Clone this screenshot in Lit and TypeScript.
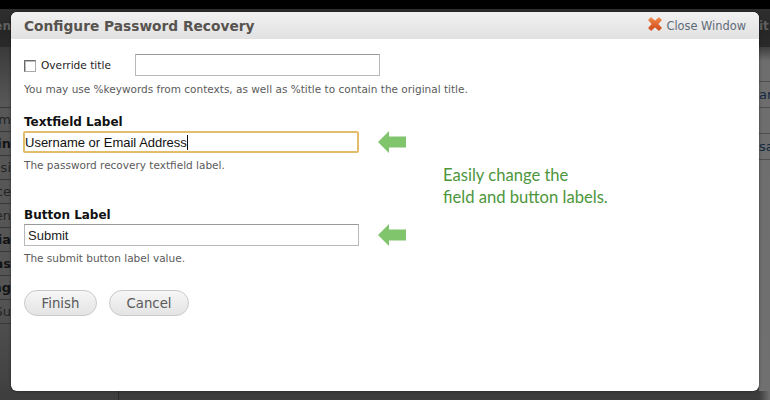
import { LitElement, html, css, svg } from "lit";
import { customElement } from "lit/decorators.js";

const arrow = svg`<svg class="arrow" width="28" height="22" viewBox="0 0 28 22"><polygon points="0,11 11,0 11,5.5 28,5.5 28,16.5 11,16.5 11,22" fill="#80c46c"/></svg>`;

@customElement("app-root")
export class AppRoot extends LitElement {
  static styles = css`
    :host { display: block; width: 770px; height: 400px; position: relative; overflow: hidden; background: #3c3c3c; font-family: "DejaVu Sans", Verdana, sans-serif; }
    .topline { height: 9px; background: #000; }
    .topbar { height: 38px; background: linear-gradient(#2f2f2f, #262626 60%, #2a2a2a); display: flex; justify-content: space-between; align-items: center; font-size: 12px; color: #5f5f5f; font-weight: bold; padding-bottom: 4px; box-sizing: border-box; }
    .topbar span { width: 11px; overflow: hidden; display: flex; white-space: nowrap; }
    .topbar .l { justify-content: flex-end; }
    .topbar .r { justify-content: flex-start; }
    .under { height: 353px; display: flex; justify-content: space-between; }
    .left { width: 11px; background: linear-gradient(#3a3a3a, #575757 16%, #555 70%, #3e3e3e); padding-top: 60px; box-sizing: border-box; }
    .right { width: 11px; background: linear-gradient(#3e3e3e, #6d6d6d 4%, #707070); padding-top: 34px; box-sizing: border-box; }
    .row { height: 24px; border-top: 1px solid #383838; box-sizing: border-box; display: flex; align-items: center; justify-content: flex-end; overflow: hidden; color: #242424; font-size: 13px; white-space: nowrap; }
    .row.b { font-weight: bold; color: #141414; }
    .left .end { height: 1px; background: #383838; }
    .rrow { height: 26px; border-top: 1px solid #4f4f4f; box-sizing: border-box; overflow: hidden; color: #12293f; font-size: 13px; display: flex; align-items: center; white-space: nowrap; }
    .foot { position: absolute; left: 0; right: 0; bottom: 0; height: 9px; display: flex; }
    .foot .a { width: 118px; background: #3e3e3e; border-right: 1px solid #2a2a2a; }
    .foot .b { flex: 1; background: #3c3c3c; }
    .foot .c { width: 11px; background: linear-gradient(90deg, #3c3c3c, #6f6f6f); }

    .modal { position: absolute; left: 11px; top: 12px; width: 748px; height: 379px; background: #fff; border-radius: 6px; overflow: hidden; box-shadow: 0 0 3px rgba(0,0,0,.5); }
    .head { height: 27px; background: linear-gradient(#f1f1f1, #e1e1e1); display: flex; justify-content: space-between; align-items: center; padding: 0 13px 0 13px; }
    .title { font-size: 13.75px; font-weight: bold; color: #57534f; }
    .close { display: flex; align-items: center; gap: 4px; font-size: 11.4px; color: #5f6b78; }
    .close svg { margin-top: -3px; }
    .body { padding: 15px 13px 0 13px; color: #5b5b5b; font-size: 10.5px; }
    .override { display: flex; align-items: center; height: 22px; font-size: 10.6px; color: #1c1c1c; }
    .check { width: 10px; height: 10px; border: 1px solid #6a6a6a; border-right-color: #aaa; border-bottom-color: #aaa; background: #fff; margin: 2px 5px 0 0; flex: none; box-shadow: inset 1px 1px 0 #bbb; }
    .override .lab { width: 94px; }
    .ov-input { width: 245px; height: 22px; box-sizing: border-box; border: 1px solid #b8b8b8; border-top-color: #999; }
    .hint { height: 14px; line-height: 14px; white-space: nowrap; }
    .hint.first { margin-top: 6px; }
    .label { font-size: 12px; font-weight: bold; color: #111; line-height: 14px; height: 14px; }
    .field { display: flex; align-items: center; margin-top: 2px; }
    .input { width: 335px; height: 22px; box-sizing: border-box; border: 1px solid #b8b8b8; border-top-color: #999; font-family: "Liberation Sans", Arial, sans-serif; font-size: 13px; color: #222; padding-left: 3px; display: flex; align-items: center; flex: none; }
    .input.focus { width: 336px; margin-left: -1px; border: 2px solid #e3bc6c; border-radius: 2px; color: #111; padding-left: 0; }
    .caret { width: 1px; height: 15px; background: #111; }
    .arrow { margin-left: 19px; flex: none; }
    .mt1 { margin-top: 19px; }
    .hint2 { margin-top: 5px; }
    .mt2 { margin-top: 36px; }
    .note-wrap { position: absolute; left: 432px; top: 152px; font-family: Lato, "Open Sans", sans-serif; font-size: 16.6px; line-height: 22px; color: #4d963c; }
    .buttons { display: flex; gap: 12px; margin-top: 25px; }
    .btn { height: 26px; box-sizing: border-box; border: 1px solid #c9c9c9; border-radius: 13px; background: linear-gradient(#f6f6f6, #e4e4e4); color: #5a5a5a; font-size: 13.3px; display: flex; align-items: center; justify-content: center; }
    .btn.f { width: 73px; }
    .btn.c { width: 80px; }
  `;

  render() {
    const rows: [string, boolean][] = [["m", false], ["in", true], ["si", false], ["ce", false], ["en", false], ["ia", true], ["as", true], ["ag", true], ["Su", false]];
    return html`
      <div class="topline"></div>
      <div class="topbar"><span class="l">en</span><span class="r">it</span></div>
      <div class="under">
        <div class="left">
          ${rows.map(([t, b]) => html`<div class="row ${b ? "b" : ""}">${t}</div>`)}
          <div class="end"></div>
        </div>
        <div class="right">
          <div class="rrow">ar</div>
          <div class="rrow"></div>
          <div class="rrow">sa</div>
          <div class="rrow"></div>
        </div>
      </div>
      <div class="foot"><div class="a"></div><div class="b"></div><div class="c"></div></div>

      <div class="modal">
        <div class="head">
          <div class="title">Configure Password Recovery</div>
          <div class="close">
            <svg width="14" height="14" viewBox="0 0 14 14">
              <defs><linearGradient id="x" x1="0" y1="0" x2="0" y2="1"><stop offset="0" stop-color="#f08a4a"/><stop offset="1" stop-color="#d0481a"/></linearGradient></defs>
              <path fill="url(#x)" d="M3 0.5 7 4 11 0.5 13.5 3 10 7 13.5 11 11 13.5 7 10 3 13.5 0.5 11 4 7 0.5 3Z" stroke="url(#x)" stroke-width="0.8" stroke-linejoin="round"/>
            </svg>
            <span>Close Window</span>
          </div>
        </div>
        <div class="body">
          <div class="override"><span class="check"></span><span class="lab">Override title</span><div class="ov-input"></div></div>
          <div class="hint first">You may use %keywords from contexts, as well as %title to contain the original title.</div>
          <div class="label mt1">Textfield Label</div>
          <div class="field"><div class="input focus">Username or Email Address<span class="caret"></span></div>${arrow}</div>
          <div class="hint hint2">The password recovery textfield label.</div>
          <div class="label mt2">Button Label</div>
          <div class="field"><div class="input">Submit</div>${arrow}</div>
          <div class="hint hint2">The submit button label value.</div>
          <div class="buttons"><div class="btn f">Finish</div><div class="btn c">Cancel</div></div>
        </div>
        <div class="note-wrap">Easily change the<br />field and button labels.</div>
      </div>
    `;
  }
}
